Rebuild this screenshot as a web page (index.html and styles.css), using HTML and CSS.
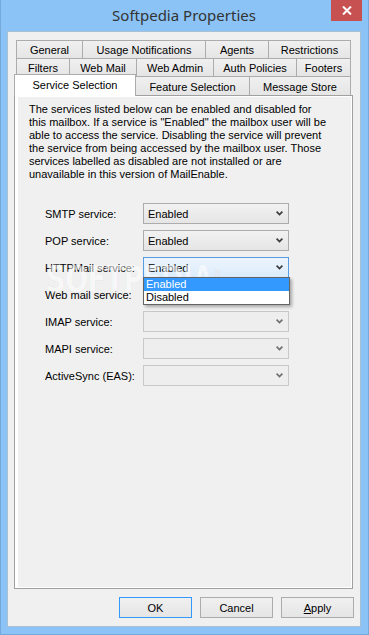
FILE: index.html
```html
<!DOCTYPE html>
<html lang='en'>
<head>
  <meta charset='UTF-8'>
  <meta name='viewport' content='width=device-width, initial-scale=1.0'>
  <title>Softpedia Properties</title>
  <link rel="stylesheet" href="styles.css">
</head>
<body>
<div class='window'>
  <header class='titlebar'>
    <span></span>
    <h1 class='title'>Softpedia Properties</h1>
    <div class='close-cell'>
      <button class='close' aria-label='Close'>
        <svg width='10' height='9' viewBox='0 0 10 9'>
          <path d='M1 0.5 L9 8.5 M9 0.5 L1 8.5' stroke='#fff' stroke-width='2'/>
        </svg>
      </button>
    </div>
  </header>

  <div class='client'>
    <div class='tabs'>
      <div class='tab-row row-1'>
        <div class='tab'>General</div>
        <div class='tab'>Usage Notifications</div>
        <div class='tab'>Agents</div>
        <div class='tab'>Restrictions</div>
      </div>
      <div class='tab-row row-2'>
        <div class='tab'>Filters</div>
        <div class='tab'>Web Mail</div>
        <div class='tab'>Web Admin</div>
        <div class='tab'>Auth Policies</div>
        <div class='tab'>Footers</div>
      </div>
      <div class='tab-row row-3'>
        <div class='tab selected'>Service Selection</div>
        <div class='tab after-selected'>Feature Selection</div>
        <div class='tab'>Message Store</div>
      </div>
    </div>

    <div class='panel'>
      <div class='page'>
        <p class='intro'>The services listed below can be enabled and disabled for<br>
this mailbox. If a service is "Enabled" the mailbox user will be<br>
able to access the service. Disabling the service will prevent<br>
the service from being accessed by the mailbox user. Those<br>
services labelled as disabled are not installed or are<br>
unavailable in this version of MailEnable.</p>

        <div class='services'>
          <label class='svc-label'>SMTP service:</label>
          <div class='combo'>
            <span>Enabled</span>
            <svg class='chev' width='7' height='5' viewBox='0 0 7 5'><polyline points='0.6,0.6 3.5,3.6 6.4,0.6' fill='none' stroke='#3c3c3c' stroke-width='1.7'/></svg>
          </div>

          <label class='svc-label'>POP service:</label>
          <div class='combo'>
            <span>Enabled</span>
            <svg class='chev' width='7' height='5' viewBox='0 0 7 5'><polyline points='0.6,0.6 3.5,3.6 6.4,0.6' fill='none' stroke='#3c3c3c' stroke-width='1.7'/></svg>
          </div>

          <label class='svc-label'>HTTPMail service:</label>
          <div class='combo focused'>
            <span>Enabled</span>
            <svg class='chev' width='7' height='5' viewBox='0 0 7 5'><polyline points='0.6,0.6 3.5,3.6 6.4,0.6' fill='none' stroke='#3c3c3c' stroke-width='1.7'/></svg>
            <ul class='dropdown'>
              <li class='active'>Enabled</li>
              <li>Disabled</li>
            </ul>
          </div>

          <label class='svc-label'>Web mail service:</label>
          <div class='combo disabled'>
            <span></span>
            <svg class='chev' width='7' height='5' viewBox='0 0 7 5'><polyline points='0.6,0.6 3.5,3.6 6.4,0.6' fill='none' stroke='#707070' stroke-width='1.7'/></svg>
          </div>

          <label class='svc-label'>IMAP service:</label>
          <div class='combo disabled'>
            <span></span>
            <svg class='chev' width='7' height='5' viewBox='0 0 7 5'><polyline points='0.6,0.6 3.5,3.6 6.4,0.6' fill='none' stroke='#707070' stroke-width='1.7'/></svg>
          </div>

          <label class='svc-label'>MAPI service:</label>
          <div class='combo disabled'>
            <span></span>
            <svg class='chev' width='7' height='5' viewBox='0 0 7 5'><polyline points='0.6,0.6 3.5,3.6 6.4,0.6' fill='none' stroke='#707070' stroke-width='1.7'/></svg>
          </div>

          <label class='svc-label'>ActiveSync (EAS):</label>
          <div class='combo disabled'>
            <span></span>
            <svg class='chev' width='7' height='5' viewBox='0 0 7 5'><polyline points='0.6,0.6 3.5,3.6 6.4,0.6' fill='none' stroke='#707070' stroke-width='1.7'/></svg>
          </div>
        </div>

        <div class='watermark'>SOFTPEDIA<sup>®</sup></div>
      </div>
    </div>

    <div class='buttons'>
      <button class='btn default'>OK</button>
      <button class='btn'>Cancel</button>
      <button class='btn'><u>A</u>pply</button>
    </div>
  </div>
</div>
</body>
</html>
```

FILE: styles.css
```css
html, body {
    margin: 0;
    padding: 0;
}

body {
    font-family: "Liberation Sans", Arial, sans-serif;
    font-size: 11px;
    color: #000;
}

.window {
    width: 369px;
    height: 635px;
    box-sizing: border-box;
    background-color: #8bc3f6;
    border: 1px solid #74a9dc;
    border-top: none;
    padding: 0 7px 7px 6px;
    display: flex;
    flex-direction: column;
}

/* title bar */
.titlebar {
    height: 31px;
    display: grid;
    grid-template-columns: 1fr auto 1fr;
    align-items: start;
}

.title {
    margin: 0;
    padding-top: 5px;
    font-family: "Noto Sans", "Open Sans", sans-serif;
    font-weight: normal;
    font-size: 15px;
    line-height: 20px;
    color: #333;
    white-space: nowrap;
}

.close-cell {
    display: flex;
    justify-content: flex-end;
}

.close {
    width: 31px;
    height: 21px;
    margin-right: -1px;
    padding: 0;
    border: none;
    background-color: #c75050;
    display: flex;
    align-items: center;
    justify-content: center;
}

/* client area */
.client {
    flex: 1;
    display: flex;
    flex-direction: column;
    background-color: #f0f0f0;
    border: 1px solid #a9bfd3;
}

.tabs {
    margin: 8px 0 0 8px;
    width: 335px;
}

.tab-row {
    display: grid;
    height: 18px;
}

.row-1 {
    grid-template-columns: 66px 123px 63px 83px;
}

.row-2 {
    grid-template-columns: 53px 67px 77px 83px 55px;
}

.row-3 {
    height: 19px;
    margin-left: -2px;
    width: 337px;
    grid-template-columns: 122px 113px 102px;
}

.tab {
    box-sizing: border-box;
    border-top: 1px solid #acacac;
    border-left: 1px solid #acacac;
    background: linear-gradient(#f0f0f0, #e5e5e5);
    display: flex;
    align-items: center;
    justify-content: center;
    white-space: nowrap;
    padding-top: 1px;
}

.tab:last-child {
    border-right: 1px solid #acacac;
}

.tab.selected {
    position: relative;
    z-index: 1;
    margin-top: -2px;
    margin-bottom: -1px;
    background: #fff;
    border-right: 1px solid #acacac;
    padding-top: 0;
    padding-bottom: 2px;
}

.tab.after-selected {
    border-left: none;
}

/* tab page */
.panel {
    flex: 1;
    margin: 0 7px 0 6px;
    border: 1px solid #a0a0a0;
    background-color: #fff;
    padding: 1px 1px 1px 3px;
    display: flex;
}

.page {
    flex: 1;
    position: relative;
    background-color: #f0f0f0;
    padding: 6px 0 0 11px;
}

.intro {
    margin: 0;
    line-height: 13px;
    white-space: nowrap;
}

.services {
    margin: 22px 0 0 16px;
    display: grid;
    grid-template-columns: 98px 146px;
    grid-auto-rows: 21px;
    row-gap: 6px;
    align-items: center;
}

.combo {
    position: relative;
    height: 21px;
    box-sizing: border-box;
    border: 1px solid #acacac;
    background: linear-gradient(#f2f2f2, #e5e5e5);
    display: flex;
    align-items: center;
    justify-content: space-between;
    padding: 0 5px 0 4px;
}

.combo.focused {
    border-color: #569de5;
    background: linear-gradient(#ecf4fc, #dcecfc);
}

.combo.disabled {
    border-color: #c8c8c8;
    background: #eeeeee;
}

.dropdown {
    position: absolute;
    z-index: 2;
    top: 19px;
    left: -1px;
    width: 147px;
    box-sizing: border-box;
    margin: 0;
    padding: 0;
    list-style: none;
    background: #fff;
    border: 1px solid #646464;
    box-shadow: 2px 2px 3px rgba(0, 0, 0, 0.3);
}

.dropdown li {
    height: 13px;
    line-height: 13px;
    padding-left: 2px;
}

.dropdown li.active {
    background-color: #3399ff;
    color: #fff;
}

.watermark {
    position: absolute;
    left: 28px;
    top: 160px;
    font-family: "DejaVu Sans", sans-serif;
    font-weight: bold;
    font-size: 38px;
    letter-spacing: -1px;
    color: rgba(255, 255, 255, 0.55);
    -webkit-text-stroke: 1px rgba(0, 0, 0, 0.05);
    transform: scaleX(0.72);
    transform-origin: left top;
    pointer-events: none;
    z-index: 1;
}

.watermark sup {
    font-size: 12px;
    font-weight: normal;
}

/* dialog buttons */
.buttons {
    display: flex;
    justify-content: flex-end;
    gap: 8px;
    padding: 8px 6px 8px 0;
}

.btn {
    width: 73px;
    height: 21px;
    padding: 0;
    font-family: "Liberation Sans", Arial, sans-serif;
    font-size: 11px;
    color: #000;
    border: 1px solid #acacac;
    background: linear-gradient(#f0f0f0, #e5e5e5);
}

.btn.default {
    border-color: #3399ff;
}
```
